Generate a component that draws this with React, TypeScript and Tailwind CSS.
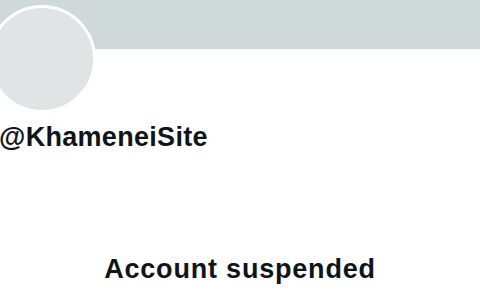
import React from "react";

export default function App() {
  return (
    <div
      className="w-[480px] h-[300px] overflow-hidden bg-white flex flex-col text-[#0f1419]"
      style={{ fontFamily: '"Liberation Sans", Arial, sans-serif' }}
    >
      {/* banner */}
      <div className="h-[49px] w-full bg-[#cfd9da] shrink-0" />

      {/* avatar, overlaps the banner */}
      <div className="-mt-[44px] -ml-[12px] w-[108px] h-[108px] rounded-full border-[3px] border-white bg-[#e0e4e5] shrink-0" />

      <div className="mt-[9px] -ml-[1px] text-[27px] leading-[30px] font-bold tracking-[0.3px]">
        @KhameneiSite
      </div>

      <div className="mt-[102px] text-center text-[27px] leading-[30px] font-bold tracking-[0.8px]">
        Account suspended
      </div>
    </div>
  );
}
